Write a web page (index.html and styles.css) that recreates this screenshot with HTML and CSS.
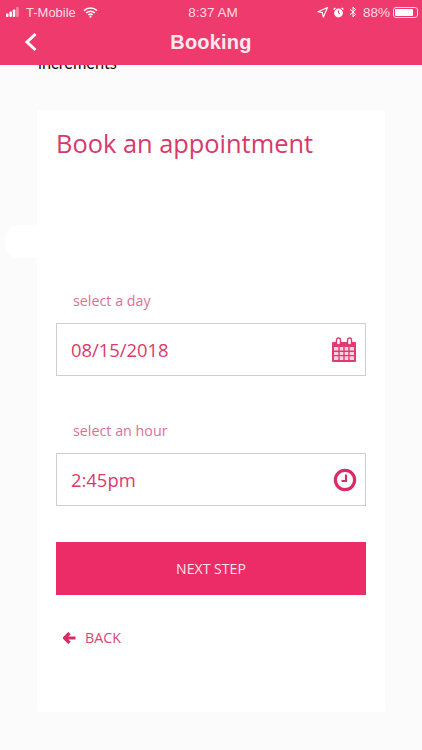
FILE: index.html
```html
<!DOCTYPE html>
<html lang="en">
<head>
<meta charset="utf-8">
<title>Booking</title>
<link rel="stylesheet" href="styles.css">
</head>
<body>
<div class="app">
  <header class="header">
    <div class="status">
      <div class="status-left">
        <svg class="signal" width="15" height="10" viewBox="0 0 15 10"><rect x="0" y="6.5" width="2.5" height="3.5" rx=".8" fill="#fff"/><rect x="3.4" y="4.5" width="2.5" height="5.5" rx=".8" fill="#fff"/><rect x="6.8" y="2.5" width="2.5" height="7.5" rx=".8" fill="#fff"/><rect x="10.2" y="0" width="2.5" height="10" rx=".8" fill="#fff" opacity=".4"/></svg>
        <span class="carrier">T-Mobile</span>
        <svg class="wifi" width="15" height="11" viewBox="0 0 15 11"><path d="M1 3.6a9.4 9.4 0 0 1 13 0M3.2 5.9a6.2 6.2 0 0 1 8.6 0M5.4 8a3 3 0 0 1 4.2 0" fill="none" stroke="#fff" stroke-width="1.5"/><circle cx="7.5" cy="9.7" r="1.1" fill="#fff"/></svg>
      </div>
      <span class="clock">8:37 AM</span>
      <div class="status-right">
        <svg width="11" height="11" viewBox="0 0 11 11"><path d="M10.5.5 1 4.8l4.4.8.9 4.6z" fill="none" stroke="#fff" stroke-width="1.1" stroke-linejoin="round"/></svg>
        <svg width="11" height="11" viewBox="0 0 11 11"><circle cx="5.5" cy="6" r="4.4" fill="#fff"/><path d="M5.5 3.4V6l1.6 1" fill="none" stroke="#ee3a6c" stroke-width="1"/><path d="M.6 2.6 2.4.9M10.4 2.6 8.6.9" stroke="#fff" stroke-width="1.4"/></svg>
        <svg width="8" height="12" viewBox="0 0 8 12"><path d="M1 3.2 6.6 8.4 4 11V1l2.6 2.6L1 8.8" fill="none" stroke="#fff" stroke-width="1"/></svg>
        <span class="pct">88%</span>
        <span class="battery"><span class="battery-fill"></span></span>
      </div>
    </div>
    <div class="nav">
      <svg class="chev" width="14" height="20" viewBox="0 0 14 20"><path d="M11.5 2 3 10l8.5 8" fill="none" stroke="#fff" stroke-width="3"/></svg>
      <h1 class="nav-title">Booking</h1>
    </div>
  </header>
  <main class="content">
    <div class="clip"><span class="clip-text">increments</span></div>
    <span class="blob"></span>
    <section class="card">
      <h2 class="title">Book an appointment</h2>
      <div class="field field-day">
        <label class="label">select a day</label>
        <div class="input">
          <span class="value">08/15/2018</span>
          <svg class="icon" width="26" height="26" viewBox="0 0 26 26"><path d="M2 5h22a1 1 0 0 1 1 1v18a1 1 0 0 1-1 1H2a1 1 0 0 1-1-1V6a1 1 0 0 1 1-1z" fill="#e23a72"/><rect x="3" y="10" width="20" height="13" fill="#f9d3e0"/><path d="M3 14.3h20M3 18.6h20M8 10v13M13 10v13M18 10v13" stroke="#e23a72" stroke-width="1.4"/><rect x="5.5" y="1" width="4" height="7" rx="2" fill="#fff" stroke="#e23a72" stroke-width="1.4"/><rect x="16.5" y="1" width="4" height="7" rx="2" fill="#fff" stroke="#e23a72" stroke-width="1.4"/></svg>
        </div>
      </div>
      <div class="field field-hour">
        <label class="label">select an hour</label>
        <div class="input">
          <span class="value">2:45pm</span>
          <svg class="icon" width="24" height="24" viewBox="0 0 24 24"><circle cx="12" cy="12" r="9.6" fill="none" stroke="#d92b66" stroke-width="3.2"/><path d="M13 6.5v6.5H8.5" fill="none" stroke="#d92b66" stroke-width="2.2"/></svg>
        </div>
      </div>
      <button class="next" type="button">NEXT STEP</button>
      <a class="back">
        <svg width="13" height="12" viewBox="0 0 13 12"><path d="M6.5 1 1.5 6l5 5M2 6h10.5" fill="none" stroke="#dc2a66" stroke-width="3.2"/></svg>
        <span>BACK</span>
      </a>
    </section>
  </main>
</div>
</body>
</html>
```
FILE: styles.css
```css
* { box-sizing: border-box; }
html, body { margin: 0; padding: 0; }
body { width: 422px; height: 750px; overflow: hidden; background: #fbfbfb; font-family: "Open Sans", sans-serif; }
.app { display: flex; flex-direction: column; height: 750px; }
.header { height: 65px; flex: none; background: #ee3a6c; color: #fff; font-family: "Liberation Sans", Arial, sans-serif; padding-top: 2px; }
.status { height: 20px; display: grid; grid-template-columns: 1fr auto 1fr; align-items: center; padding: 0 4px 0 6px; font-size: 13.5px; color: #fbdce6; }
.status-left { display: flex; align-items: center; gap: 4px; }
.status-right { display: flex; align-items: center; justify-content: flex-end; gap: 5px; }
.carrier { margin-left: 1px; font-size: 13px; }
.wifi { margin-left: 3px; }
.clock { padding-left: 2px; }
.pct { margin-left: 1px; margin-right: -2px; }
.battery { width: 25px; height: 11px; border: 1px solid #fbdce6; border-radius: 3px; padding: 1px; display: block; }
.battery-fill { display: block; width: 88%; height: 100%; background: #fff; border-radius: 1px; }
.nav { display: flex; align-items: center; justify-content: center; height: 40px; position: relative; }
.chev { position: absolute; left: 24px; top: 10px; }
.nav-title { margin: 0; font-size: 20px; font-weight: 700; color: #fdeaf0; letter-spacing: .2px; }
.content { flex: 1; position: relative; display: flex; flex-direction: column; align-items: center; }
.clip { align-self: stretch; height: 7px; overflow: hidden; padding-left: 38px; margin-bottom: 38px; }
.clip-text { display: block; margin-top: -12px; font: 16.3px/20px Lato, sans-serif; color: #111; }
.blob { position: absolute; left: 5px; top: 160px; width: 34px; height: 33px; background: #fff; border-radius: 14px 0 0 14px; }
.card { width: 348px; height: 602px; background: #fff; padding: 17px 19px 0; border-radius: 3px; display: flex; flex-direction: column; }
.title { margin: 0; font-size: 25.4px; font-weight: 400; line-height: 32px; color: #d63a6c; }
.field-day { margin-top: 132px; }
.field-hour { margin-top: 45px; }
.label { display: block; padding-left: 17px; font-size: 14.3px; line-height: 19px; color: #df6e95; margin-bottom: 13px; }
.input { width: 310px; height: 53px; border: 1px solid #cfcfcf; background: #fff; display: flex; align-items: center; justify-content: space-between; padding: 0 8px 0 14px; }
.value { font-size: 18.4px; color: #d93a6e; }
.next { width: 310px; height: 53px; margin-top: 36px; background: #ec2c66; color: #fbe4ec; border: 0; font: 14.1px "Open Sans", sans-serif; padding: 0; }
.back { display: flex; align-items: center; gap: 9px; margin-top: 33px; padding-left: 7px; font-size: 14.3px; line-height: 19px; color: #d9467a; }
```
